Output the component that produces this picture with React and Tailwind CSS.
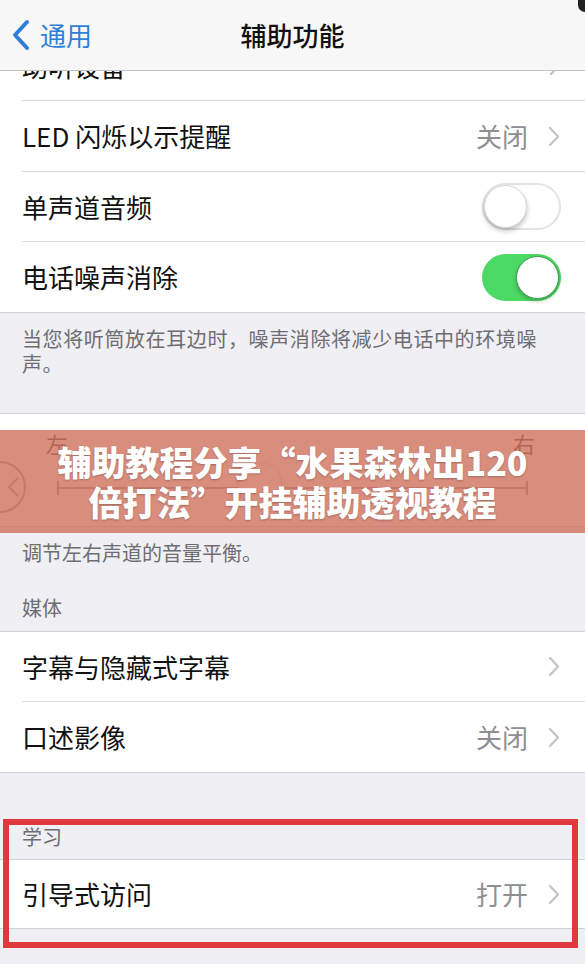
import React from "react";

const Chevron = () => (
  <svg width="12" height="21" viewBox="0 0 12 21" className="shrink-0">
    <path d="M2 2 L10 10.5 L2 19" fill="none" stroke="#c4c4c9" strokeWidth="2.4" strokeLinecap="round" strokeLinejoin="round" />
  </svg>
);

const BackChevron = () => (
  <svg width="20" height="32" viewBox="0 0 20 32" className="shrink-0">
    <path d="M16 3 L4 16 L16 29" fill="none" stroke="#2f7fd8" strokeWidth="4" strokeLinecap="round" strokeLinejoin="round" />
  </svg>
);

const Toggle = ({ on }) =>
  on ? (
    <div className="w-[79px] h-[47px] rounded-full bg-[#4cd964] flex items-center justify-end pr-[2px] shrink-0">
      <div className="w-[43px] h-[43px] rounded-full bg-white border border-[#3e9a52] shadow-[0_2px_4px_rgba(0,0,0,0.25)]" />
    </div>
  ) : (
    <div className="w-[79px] h-[47px] rounded-full bg-white border-2 border-[#e3e3e6] flex items-center justify-start shrink-0">
      <div className="w-[43px] h-[43px] rounded-full bg-white border border-[#d6d6d8] shadow-[0_3px_5px_rgba(0,0,0,0.25)]" />
    </div>
  );

const Row = ({ label, value, chevron, toggle, h = "h-[70px]", last }) => (
  <div className={`${h} flex items-center pr-[24px] ${last ? "" : "border-b border-[#dcdce0]"}`}>
    <span className="flex-1 text-[26px] text-[#111] leading-none">{label}</span>
    {value && <span className="text-[26px] text-[#8e8e93] leading-none mr-[20px]">{value}</span>}
    {chevron && <span className="mr-[1px]"><Chevron /></span>}
    {toggle !== undefined && <Toggle on={toggle} />}
  </div>
);

export default function App() {
  return (
    <div className="relative w-[585px] h-[964px] overflow-hidden bg-[#efeff4] font-['Noto_Sans_CJK_SC','Liberation_Sans',sans-serif]">
      {/* Nav bar */}
      <header className="h-[71px] bg-[#f7f7f7] border-b border-[#c4c4c6] grid grid-cols-[1fr_auto_1fr] items-center">
        <div className="flex items-center pl-[11px] gap-[9px]">
          <BackChevron />
          <span className="text-[26px] text-[#2f7fd8] leading-none">通用</span>
        </div>
        <span className="text-[26px] font-medium text-[#111] leading-none">辅助功能</span>
        <div />
      </header>

      {/* partial row under nav */}
      <div className="h-[30px] overflow-hidden bg-white pl-[22px] flex flex-col justify-end">
        <div className="h-[70px] shrink-0 flex items-center pr-[24px] border-b border-[#dcdce0]">
          <span className="flex-1 text-[26px] text-[#111] leading-none">助听设备</span>
          <Chevron />
        </div>
      </div>

      {/* Group 1 rows */}
      <div className="bg-white pl-[22px] border-b border-[#d3d3d7]">
        <Row label="LED 闪烁以示提醒" value="关闭" chevron h="h-[71px]" />
        <Row label="单声道音频" toggle={false} h="h-[70px]" />
        <Row label="电话噪声消除" toggle={true} h="h-[70px]" last />
      </div>

      {/* footer 1 */}
      <div className="h-[100px] pt-[13px] pl-[22px] pr-[40px] text-[20px] leading-[25px] tracking-[0.6px] text-[#6d6d72]">
        当您将听筒放在耳边时，噪声消除将减少电话中的环境噪声。
      </div>

      {/* balance row */}
      <div className="relative h-[114px] bg-white border-y border-[#d3d3d7] overflow-hidden">
        <div className="flex justify-between pl-[46px] pr-[50px] pt-[18px] text-[22px] leading-none text-[#333]">
          <span>左</span>
          <span>右</span>
        </div>
        <div className="mt-[27px] mx-[57px] h-[14px] border-x-2 border-[#8a8a8e] flex items-center">
          <div className="h-[2px] w-full bg-[#9a9a9e]" />
        </div>
        <div className="absolute left-[238px] top-[48px] w-[44px] h-[44px] rounded-full bg-white border border-[#ddd] shadow-[0_2px_5px_rgba(0,0,0,0.2)]" />
        <div className="absolute left-[-26px] top-[47px] w-[52px] h-[52px] rounded-full border-2 border-[#9a9a9e] flex items-center justify-end pr-[4px]">
          <svg width="14" height="22" viewBox="0 0 14 22">
            <path d="M12 2 L3 11 L12 20" fill="none" stroke="#9a9a9e" strokeWidth="2" />
          </svg>
        </div>
      </div>

      {/* footer 2 */}
      <div className="pt-[13px] pb-[11px] px-[22px] text-[20px] leading-[25px] text-[#6d6d72]">
        <div>调节左右声道的音量平衡。</div>
        <div className="mt-[30px]">媒体</div>
      </div>

      {/* media group */}
      <div className="bg-white pl-[22px] border-y border-[#d3d3d7]">
        <Row label="字幕与隐藏式字幕" chevron h="h-[70px]" />
        <Row label="口述影像" value="关闭" chevron h="h-[70px]" last />
      </div>

      {/* learning header */}
      <div className="pt-[51px] pb-[10px] px-[22px] text-[20px] leading-[25px] text-[#6d6d72]">学习</div>

      <div className="bg-white pl-[22px] border-y border-[#d3d3d7]">
        <Row label="引导式访问" value="打开" chevron h="h-[68px]" last />
      </div>

      {/* overlay banner */}
      <div className="absolute left-0 top-[430px] w-full h-[103px] bg-[#d0705c]/80 flex flex-col items-center justify-center text-white font-black text-[34px] leading-[40px] [text-shadow:0_1px_2px_rgba(0,0,0,0.25)]">
        <div>辅助教程分享“水果森林出120</div>
        <div>倍打法”开挂辅助透视教程</div>
      </div>

      {/* red highlight box */}
      <div className="absolute left-[3px] top-[819px] w-[575px] h-[129px] border-[6px] border-[#e0393e]" />

      {/* top-right dark corner */}
      <div className="absolute right-0 top-0 w-[7px] h-[12px] bg-[#222] rounded-bl-full" />
    </div>
  );
}
